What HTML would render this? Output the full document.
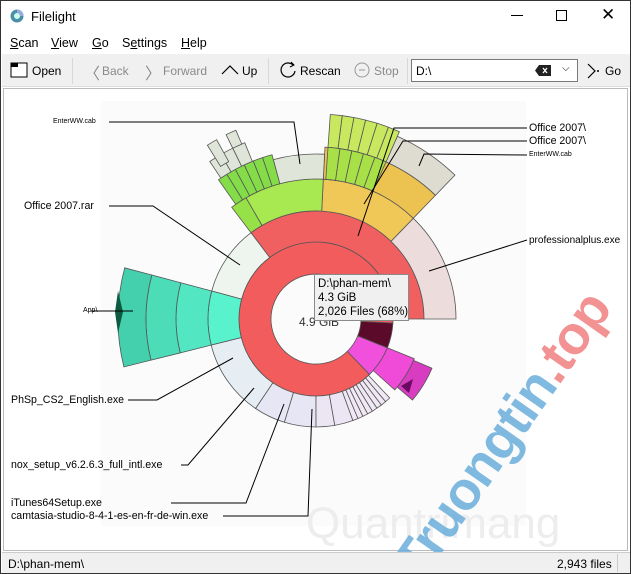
<!DOCTYPE html>
<html><head><meta charset="utf-8"><style>
*{margin:0;padding:0;box-sizing:border-box}
html,body{width:631px;height:574px;overflow:hidden}
body{font-family:"Liberation Sans",sans-serif;font-size:12px;color:#000;background:#fff;position:relative}
.win{position:absolute;left:0;top:0;width:631px;height:574px;border:1px solid #333;background:#fff;overflow:hidden}
.t{position:absolute;white-space:nowrap}
.lb{font-size:10.6px}
.tb{position:absolute;left:1px;top:53px;width:629px;height:33px;background:#f0f0f0;border-bottom:1px solid #ddd}
.sep{position:absolute;top:4px;width:1px;height:26px;background:#d8d8d8}
.gray{color:#8a8a8a}
u{text-decoration:underline}
</style></head><body>
<div class="win">
 <svg class="t" style="left:8px;top:7px" width="16" height="16"><circle cx="8" cy="8" r="6.5" fill="#4a8fa8"/><circle cx="8" cy="8" r="3" fill="#cfe"/><path d="M8 1.5A6.5 6.5 0 0 1 14.5 8H11A3 3 0 0 0 8 5Z" fill="#9ad"/></svg>
 <div class="t" style="left:30px;top:8px;font-size:13px">Filelight</div>
 <div class="t" style="left:510px;top:14px;width:12px;height:1px;background:#000"></div>
 <div class="t" style="left:555px;top:9px;width:11px;height:11px;border:1px solid #000"></div>
 <div class="t" style="left:600px;top:4px;font-size:17px">✕</div>
 <div class="t" style="left:9px;top:35px;font-size:12.5px"><u>S</u>can</div>
 <div class="t" style="left:50px;top:35px;font-size:12.5px"><u>V</u>iew</div>
 <div class="t" style="left:91px;top:35px;font-size:12.5px"><u>G</u>o</div>
 <div class="t" style="left:121px;top:35px;font-size:12.5px">S<u>e</u>ttings</div>
 <div class="t" style="left:180px;top:35px;font-size:12.5px"><u>H</u>elp</div>
 <div class="tb">
  <svg class="t" style="left:8px;top:8px" width="18" height="16"><rect x="1" y="1" width="16" height="14" fill="#fff" stroke="#000"/><rect x="1" y="1" width="7" height="4" fill="#000"/></svg>
  <div class="t" style="left:30px;top:10px">Open</div>
  <div class="sep" style="left:70px"></div>
  <div class="t gray" style="left:82px;top:6px;font-size:16px">〈</div><div class="t gray" style="left:100px;top:10px">Back</div>
  <div class="t gray" style="left:143px;top:6px;font-size:16px">〉</div><div class="t gray" style="left:161px;top:10px">Forward</div>
  <svg class="t" style="left:219px;top:11px" width="18" height="10"><path d="M1 9L9 1L17 9" fill="none" stroke="#000" stroke-width="1.2"/></svg>
  <div class="t" style="left:240px;top:10px">Up</div>
  <div class="sep" style="left:266px"></div>
  <svg class="t" style="left:277px;top:7px" width="18" height="18"><path d="M14 4A7 7 0 1 0 16 10M3 13" fill="none" stroke="#000" stroke-width="1.2"/><path d="M12 1L15 4L11 6" fill="none" stroke="#000"/></svg>
  <div class="t" style="left:298px;top:10px">Rescan</div>
  <svg class="t" style="left:352px;top:8px" width="16" height="16"><circle cx="8" cy="8" r="7" fill="none" stroke="#999"/><path d="M5 8H11" stroke="#999"/></svg>
  <div class="t gray" style="left:372px;top:10px">Stop</div>
  <div class="sep" style="left:405px"></div>
  <div class="t" style="left:409px;top:5px;width:167px;height:23px;background:#fff;border:1px solid #7a7a7a"></div>
  <div class="t" style="left:414px;top:10px">D:\</div>
  <svg class="t" style="left:533px;top:11px" width="16" height="11"><path d="M4 0H16V11H4L0 5.5Z" fill="#222"/><path d="M8 3L12 8M12 3L8 8" stroke="#fff" stroke-width="1.3"/></svg>
  <div class="t" style="left:560px;top:9px;font-size:10px">⌵</div>
  <svg class="t" style="left:584px;top:9px" width="14" height="16"><path d="M2 1L9 8L2 15" fill="none" stroke="#000" stroke-width="1.2"/><circle cx="12" cy="8" r="1" fill="#000"/></svg>
  <div class="t" style="left:603px;top:10px">Go</div>
 </div>
 <div class="t" style="left:2px;top:87px;width:625px;height:463px;border:1px solid #bbb;background:#fff"></div>
 <div class="t" style="left:100px;top:100px;width:425px;height:425px;background:#fbfbfb"></div>
 <div class="t" style="left:305px;top:498px;font-size:44px;color:#ededed">Quantrimang</div>
 <svg id="ch" class="t" style="left:0;top:0" width="631" height="574"></svg>
 <div class="t" style="left:298px;top:314px;color:#333">4.9 GiB</div>
 <div class="t" style="left:313px;top:273px;width:95px;height:47px;background:#f0f0f0;border:1px solid #8a8a8a;padding:2px 3px;line-height:14px;font-size:11.5px">D:\phan-mem\<br>4.3 GiB<br>2,026 Files (68%)</div>
 <div class="t" style="left:52px;top:117px;font-size:7px">EnterWW.cab</div>
 <div class="t lb" style="left:23px;top:199px">Office 2007.rar</div>
 <div class="t" style="left:82px;top:306px;font-size:7px">App\</div>
 <div class="t lb" style="left:10px;top:393px">PhSp_CS2_English.exe</div>
 <div class="t lb" style="left:10px;top:458px">nox_setup_v6.2.6.3_full_intl.exe</div>
 <div class="t lb" style="left:10px;top:496px">iTunes64Setup.exe</div>
 <div class="t lb" style="left:10px;top:509px">camtasia-studio-8-4-1-es-en-fr-de-win.exe</div>
 <div class="t lb" style="left:528px;top:121px">Office 2007\</div>
 <div class="t lb" style="left:528px;top:134px">Office 2007\</div>
 <div class="t" style="left:528px;top:150px;font-size:7px">EnterWW.cab</div>
 <div class="t" style="left:528px;top:234px;font-size:10px">professionalplus.exe</div>
 <div class="t" style="left:383px;top:556px;transform:rotate(-55deg);transform-origin:0 0;font-size:54px;font-weight:bold;color:#6aaedc;opacity:.85;letter-spacing:-1px;line-height:1">Truongtin<span style="color:#f08080">.top</span></div>
 <div class="t" style="left:1px;top:551px;width:629px;height:22px;background:#f0f0f0;border-top:1px solid #ccc"></div>
 <div class="t" style="left:7px;top:556px">D:\phan-mem\</div>
 <div class="t" style="left:556px;top:556px">2,943 files</div>
 <div class="t" style="left:616px;top:553px;width:1px;height:18px;background:#ccc"></div>
</div>
<script>
var cx=315,cy=318,s=document.getElementById('ch'),o='';
function P(r,a){a=a*Math.PI/180;return (cx+r*Math.cos(a)).toFixed(1)+' '+(cy-r*Math.sin(a)).toFixed(1)}
function A(r0,r1,a0,a1,f){var l=(a1-a0)>180?1:0;o+='<path d="M'+P(r1,a0)+'A'+r1+' '+r1+' 0 '+l+' 0 '+P(r1,a1)+'L'+P(r0,a1)+'A'+r0+' '+r0+' 0 '+l+' 1 '+P(r0,a0)+'Z" fill="'+f+'" stroke="#555" stroke-width="0.8"/>'}
function S(r0,r1,a0,a1,n,f){for(var i=0;i<n;i++)A(r0,r1,a0+(a1-a0)*i/n,a0+(a1-a0)*(i+1)/n,f)}
function L(pts){o+='<polyline points="'+pts+'" fill="none" stroke="#000" stroke-width="1"/>'}
A(45,77,0,314,'#f25c5c');A(45,77,314,338,'#f050dc');A(45,77,338,357,'#5c0a2a');A(45,77,357,360,'#f25c5c');
A(77,108,0,127,'#f06060');A(77,108,127,165,'#eef4ee');
S(77,108,165,194,1,'#58f2cc');S(108,140,165,194,1,'#52e6c2');S(140,170,165,194,1,'#4cdcb8');S(170,198,165,194,1,'#44d0ac');
A(77,108,194,236,'#e6eef4');S(77,108,236,270,2,'#e6e6f4');S(77,108,270,290,2,'#ece6f4');S(77,108,290,313,8,'#f0e8f4');
A(77,106,318,338,'#f04ad8');A(106,126,320,337,'#d83cc0');
A(108,140,0,46,'#ecdcdc');A(108,140,46,87,'#f0c858');A(140,172,46,87,'#ecc250');A(172,200,46,66,'#dedbd0');
S(172,205,66,86,6,'#c8e860');S(140,172,66,86,5,'#a8e048');
A(108,140,87,120,'#a8e850');S(108,140,120,127,1,'#96e048');A(140,165,87,105,'#dfe5d8');
S(140,170,105,125,6,'#84dc48');S(170,190,112,124,3,'#dfe5d8');A(190,205,113,116,'#dfe5d8');A(180,205,119,122,'#dfe5d8');
o+='<path d="M117 290L122 311L117 332L114 311Z" fill="#0e5a40"/><path d="M400 385L412 378L408 392Z" fill="#6a0a60"/>';
L('108,121 293,121 299,163');L('108,205 152,205 239,264');L('90,310 132,310');L('127,399 156,399 232,357');
L('180,464 187,464 253,387');L('170,502 245,502 283,403');L('222,515 307,515 311,408');
L('526,127 393,127 357,235');L('526,140 402,140 363,203');L('526,154 423,153 418,165');L('526,239 428,270');
s.innerHTML=o;
</script>
</body></html>
